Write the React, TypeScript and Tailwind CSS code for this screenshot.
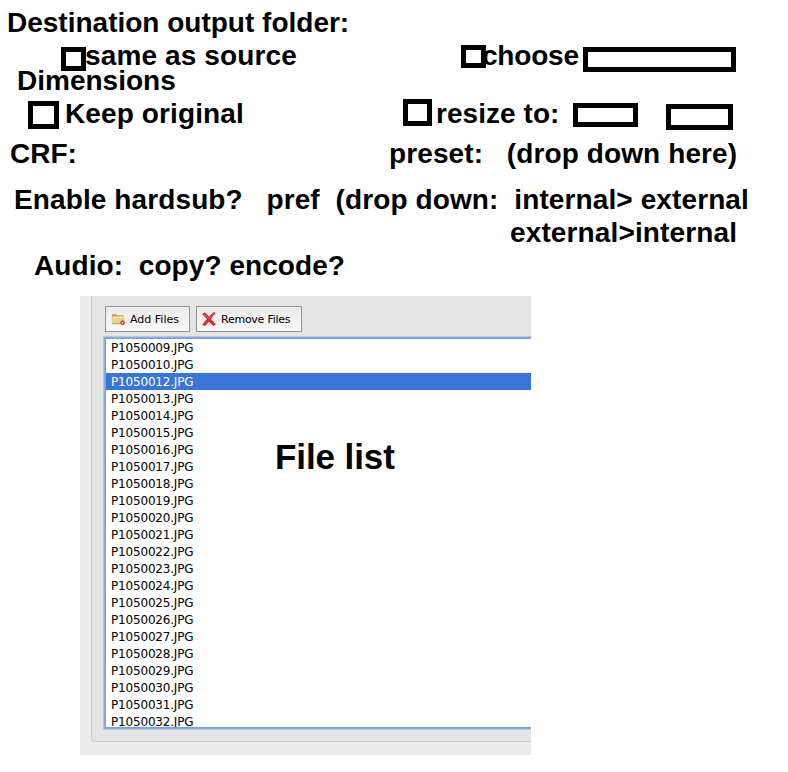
const label = 'whitespace-pre leading-8 shrink-0';
const box = 'shrink-0 border-[5px] border-black';

const files = [
  'P1050009.JPG', 'P1050010.JPG', 'P1050012.JPG', 'P1050013.JPG', 'P1050014.JPG', 'P1050015.JPG',
  'P1050016.JPG', 'P1050017.JPG', 'P1050018.JPG', 'P1050019.JPG', 'P1050020.JPG', 'P1050021.JPG',
  'P1050022.JPG', 'P1050023.JPG', 'P1050024.JPG', 'P1050025.JPG', 'P1050026.JPG', 'P1050027.JPG',
  'P1050028.JPG', 'P1050029.JPG', 'P1050030.JPG', 'P1050031.JPG', 'P1050032.JPG',
];

function FolderIcon() {
  return (
    <svg width="15" height="13" viewBox="0 0 15 13" className="shrink-0">
      <path d="M0.8 2 Q0.8 1.2 1.6 1.2 H5 L6 2.3 H11.6 Q12.4 2.3 12.4 3.1 V10.6 H1.4 Z" fill="#b99d50" />
      <path d="M1.5 3.4 H11.8 V5 H1.5 Z" fill="#f3e9bb" />
      <path d="M0.4 4.9 H13.9 L12.9 11 H1.4 Z" fill="#e6d28c" />
      <path d="M1.4 10.7 H12.9" stroke="#b0913f" strokeWidth="0.8" />
      <circle cx="11.6" cy="9.8" r="2.2" fill="#d22f22" />
      <circle cx="11.6" cy="9.8" r="0.9" fill="#fbd9cc" />
    </svg>
  );
}

function CrossIcon() {
  return (
    <svg width="14" height="14" viewBox="0 0 14 14" className="shrink-0">
      <path d="M0 2.2 L2.6 0.2 C4.2 1.4 5.6 3 7 4.7 C8.6 2.8 10.2 1.2 12.2 0 L13.6 1.2 C11.8 3 10.3 4.9 9 7 C10.5 8.8 12 10.6 14 12.2 L11.2 13.9 C9.6 12.6 8.1 11 6.9 9.4 C5.6 11 4.3 12.6 3 14 L0.2 12.8 C1.7 11 3.3 9 4.9 7.1 C3.4 5.2 1.8 3.6 0 2.2 Z" fill="#d32a2a" />
      <path d="M1.6 2 C3.8 3.6 5.4 5.3 6.9 6.6 C8.4 4.6 10.4 2.6 12.5 1.2" fill="none" stroke="#e8625e" strokeWidth="1" />
    </svg>
  );
}

function FilePanel() {
  return (
    <section className="relative ml-20 h-[459px] w-[451px] overflow-hidden bg-[#ebebeb] pl-[11px] font-['DejaVu_Sans',sans-serif] text-[11px] font-normal text-black">
      <div className="h-[446px] rounded-bl-[4px] border-b border-l border-[#c9c9c9] bg-[#e4e4e4] pl-[13px] pt-[10px]">
        <div className="flex gap-[6px]">
          <button className="flex h-[26px] w-[85px] items-center border border-[#959595] bg-linear-to-b from-[#ebebeb] to-[#f9f9f9] pl-[5px]">
            <FolderIcon />
            <span className="ml-[4px] mt-[2px] whitespace-nowrap">Add Files</span>
          </button>
          <button className="flex h-[26px] w-[106px] items-center border border-[#959595] bg-linear-to-b from-[#ebebeb] to-[#f9f9f9] pl-[5px]">
            <CrossIcon />
            <span className="ml-[5px] mt-[2px] whitespace-nowrap tracking-[-0.25px]">Remove Files</span>
          </button>
        </div>
        <ul className="ml-px mt-[7px] h-[388px] overflow-hidden bg-white text-[12px] tracking-[-0.18px] shadow-[0_0_0_1px_#789fd6,0_0_0_2px_#8aaee0,0_0_0_3px_#b4c7e4]">
          {files.map((name) => (
            <li
              key={name}
              className={
                name === 'P1050012.JPG'
                  ? 'h-[17px] bg-[#3875d7] pl-[5px] leading-[19px] text-white'
                  : 'h-[17px] pl-[5px] leading-[19px]'
              }
            >
              {name}
            </li>
          ))}
        </ul>
      </div>
      <h2 className="absolute left-[195px] top-[141px] whitespace-nowrap font-['Liberation_Sans',Arial,sans-serif] text-[35px] font-bold leading-10 tracking-[-0.1px]">
        File list
      </h2>
    </section>
  );
}

export default function App() {
  return (
    <main className="h-[772px] w-[788px] overflow-hidden bg-white pt-[7px] font-['Liberation_Sans',Arial,sans-serif] text-[28px] font-bold text-black">
      <div className="flex h-[33px] pl-[7px]">
        <span className={label}>Destination output folder:</span>
      </div>
      <div className="flex h-[25px] pl-[61px]">
        <span className={`${box} mt-[7px] h-6 w-[25px]`} />
        <span className={`${label} -ml-px w-[376px] tracking-[0.13px]`}>same as source</span>
        <span className={`${box} mt-[5px] h-[23px] w-[25px]`} />
        <span className={`${label} -ml-1 w-[101px] tracking-[-0.2px]`}>choose</span>
        <span className={`${box} mt-[7px] h-[25px] w-[153px]`} />
      </div>
      <div className="flex h-[33px] pl-[17px]">
        <span className={label}>Dimensions</span>
      </div>
      <div className="flex h-10 pl-7">
        <span className={`${box} mt-[3px] h-7 w-[31px]`} />
        <span className={`${label} ml-[6px] w-[338px] tracking-[0.12px]`}>Keep original</span>
        <span className={`${box} mt-px h-[27px] w-[29px]`} />
        <span className={`${label} ml-[4px] w-[137px] tracking-[0.05px]`}>resize to:</span>
        <span className={`${box} mt-[5px] h-6 w-[65px]`} />
        <span className={`${box} ml-7 mt-[6px] h-[26px] w-[67px]`} />
      </div>
      <div className="flex h-[46px] pl-[10px]">
        <span className={`${label} w-[379px]`}>CRF:</span>
        <span className={`${label} tracking-[0.11px]`}>{'preset:   (drop down here)'}</span>
      </div>
      <div className="flex h-[33px] pl-[14px]">
        <span className={`${label} tracking-[0.11px]`}>
          {'Enable hardsub?   pref  (drop down:  internal> external'}
        </span>
      </div>
      <div className="flex h-[33px] pl-[510px]">
        <span className={`${label} tracking-[0.13px]`}>{'external>internal'}</span>
      </div>
      <div className="flex h-[46px] pl-[34px]">
        <span className={`${label} tracking-[0.07px]`}>{'Audio:  copy? encode?'}</span>
      </div>
      <FilePanel />
    </main>
  );
}
